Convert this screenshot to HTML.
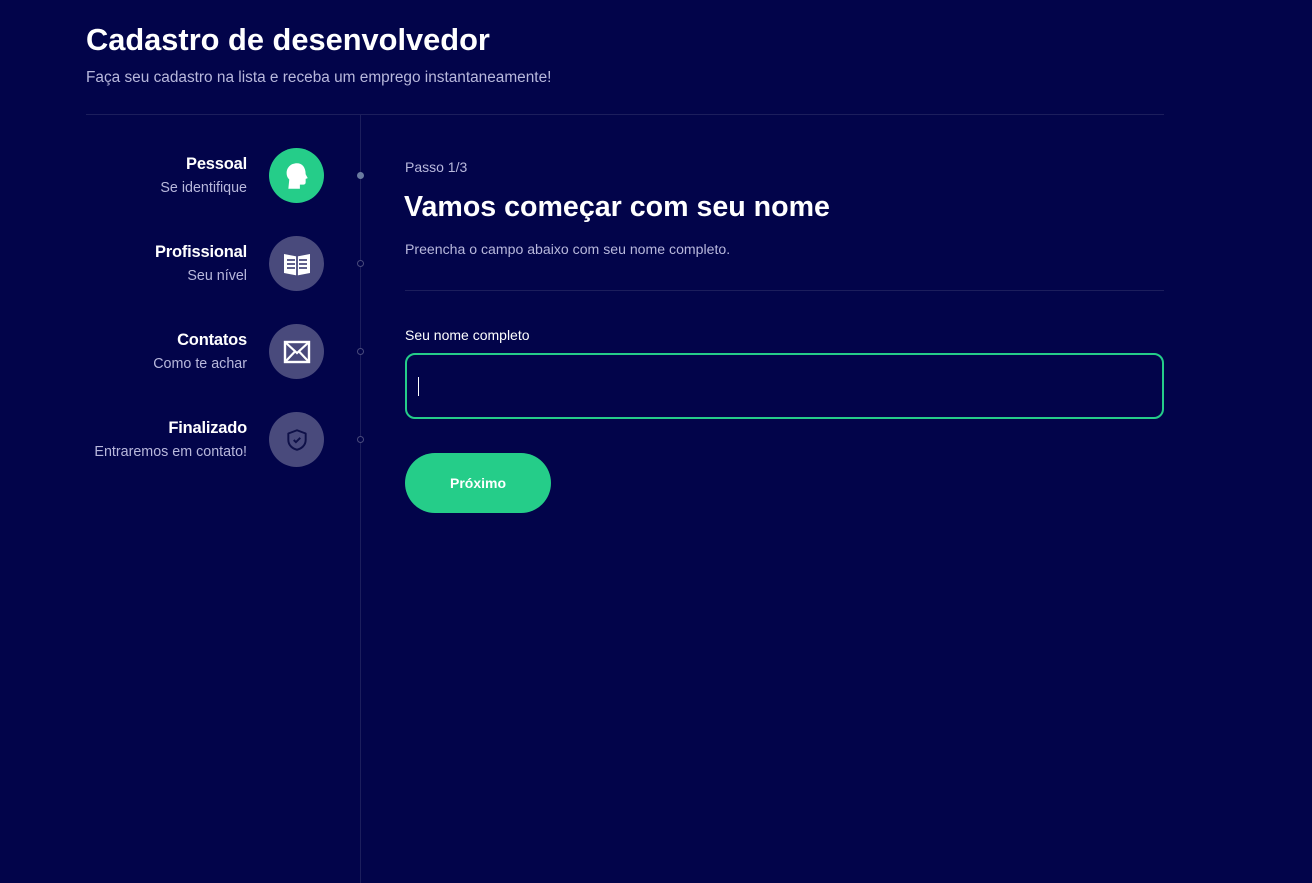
<!DOCTYPE html>
<html><head><meta charset="utf-8"><style>
*{margin:0;padding:0;box-sizing:border-box}
body{width:1312px;height:883px;background:#02044a;font-family:"Liberation Sans",sans-serif;position:relative;overflow:hidden;color:#fff}
.a{position:absolute;white-space:nowrap}
.circ{position:absolute;left:269px;width:55px;height:55px;border-radius:50%;background:#494a7c;display:flex;align-items:center;justify-content:center}
.dot{position:absolute;left:357px;width:7px;height:7px;border-radius:50%;border:1.5px solid #494a7c;background:#02044a}
.t{position:absolute;right:1065px;font-size:16.5px;font-weight:bold;text-align:right;letter-spacing:-0.2px}
.s{position:absolute;right:1065px;font-size:14.3px;color:#b8b8dc;text-align:right}
</style></head><body>
<div class="a" style="left:86px;top:22px;font-size:30.8px;font-weight:bold">Cadastro de desenvolvedor</div>
<div class="a" style="left:86px;top:69px;font-size:15.4px;color:#b8b8dc">Faça seu cadastro na lista e receba um emprego instantaneamente!</div>
<div class="a" style="left:86px;top:114px;width:1078px;height:1px;background:#1c1e5c"></div>
<div class="a" style="left:360px;top:115px;width:1px;height:768px;background:#1c1e5c"></div>

<div class="t" style="top:155px">Pessoal</div><div class="s" style="top:180px">Se identifique</div>
<div class="t" style="top:243px">Profissional</div><div class="s" style="top:268px">Seu nível</div>
<div class="t" style="top:331px">Contatos</div><div class="s" style="top:356px">Como te achar</div>
<div class="t" style="top:419px">Finalizado</div><div class="s" style="top:444px">Entraremos em contato!</div>

<div class="circ" style="top:148px;background:#25cd89"><svg width="30" height="30" viewBox="0 0 26 26"><path d="M13 2C7.5 2 4 5.8 4 10.5c0 2.5 1 4.3 2.3 5.5L5.5 24h10v-3.5h3c1.2 0 2-.8 2-2v-3l1.8-.7-1.8-3.3C20.5 5.5 17.5 2 13 2z" fill="#fff"/></svg></div>
<div class="circ" style="top:236px"><svg width="28" height="26" viewBox="0 0 28 26"><path d="M1 3l13 2.5L27 3v19l-13 2.5L1 22z" fill="#fff"/><g stroke="#494a7c" stroke-width="1.8"><path d="M4 9h8M4 13h8M4 17h8M16 9h8M16 13h8M16 17h8M14 5v20"/></g></svg></div>
<div class="circ" style="top:324px"><svg width="28" height="24" viewBox="0 0 28 24"><rect x="2" y="2" width="24" height="20" fill="none" stroke="#fff" stroke-width="2.4"/><path d="M2 2l12 11 12-11M2 22l9.5-10M26 22l-9.5-10" fill="none" stroke="#fff" stroke-width="2.2"/></svg></div>
<div class="circ" style="top:412px"><svg width="26" height="26" viewBox="0 0 24 24"><path d="M12 3l8 3v6c0 5-4 8-8 9-4-1-8-4-8-9V6z" fill="none" stroke="#0e1048" stroke-width="1.8" stroke-linejoin="round"/><path d="M9 12l2 2 4-4" fill="none" stroke="#0e1048" stroke-width="1.8"/></svg></div>

<div class="dot" style="top:172px;background:#6a7ba0;border-color:#6a7ba0"></div>
<div class="dot" style="top:260px"></div>
<div class="dot" style="top:348px"></div>
<div class="dot" style="top:436px"></div>

<div class="a" style="left:405px;top:159px;font-size:14px;color:#b8b8dc">Passo 1/3</div>
<div class="a" style="left:404px;top:191px;font-size:28.6px;font-weight:bold">Vamos começar com seu nome</div>
<div class="a" style="left:405px;top:241px;font-size:14.1px;color:#b8b8dc">Preencha o campo abaixo com seu nome completo.</div>
<div class="a" style="left:405px;top:290px;width:759px;height:1px;background:#1c1e5c"></div>
<div class="a" style="left:405px;top:327px;font-size:14px">Seu nome completo</div>
<div class="a" style="left:405px;top:353px;width:759px;height:66px;border:2px solid #25cd89;border-radius:10px"></div>
<div class="a" style="left:418px;top:377px;width:1px;height:19px;background:#fff"></div>
<div class="a" style="left:405px;top:453px;width:146px;height:60px;border-radius:30px;background:#25cd89;font-size:14px;font-weight:bold;display:flex;align-items:center;justify-content:center">Próximo</div>
</body></html>
